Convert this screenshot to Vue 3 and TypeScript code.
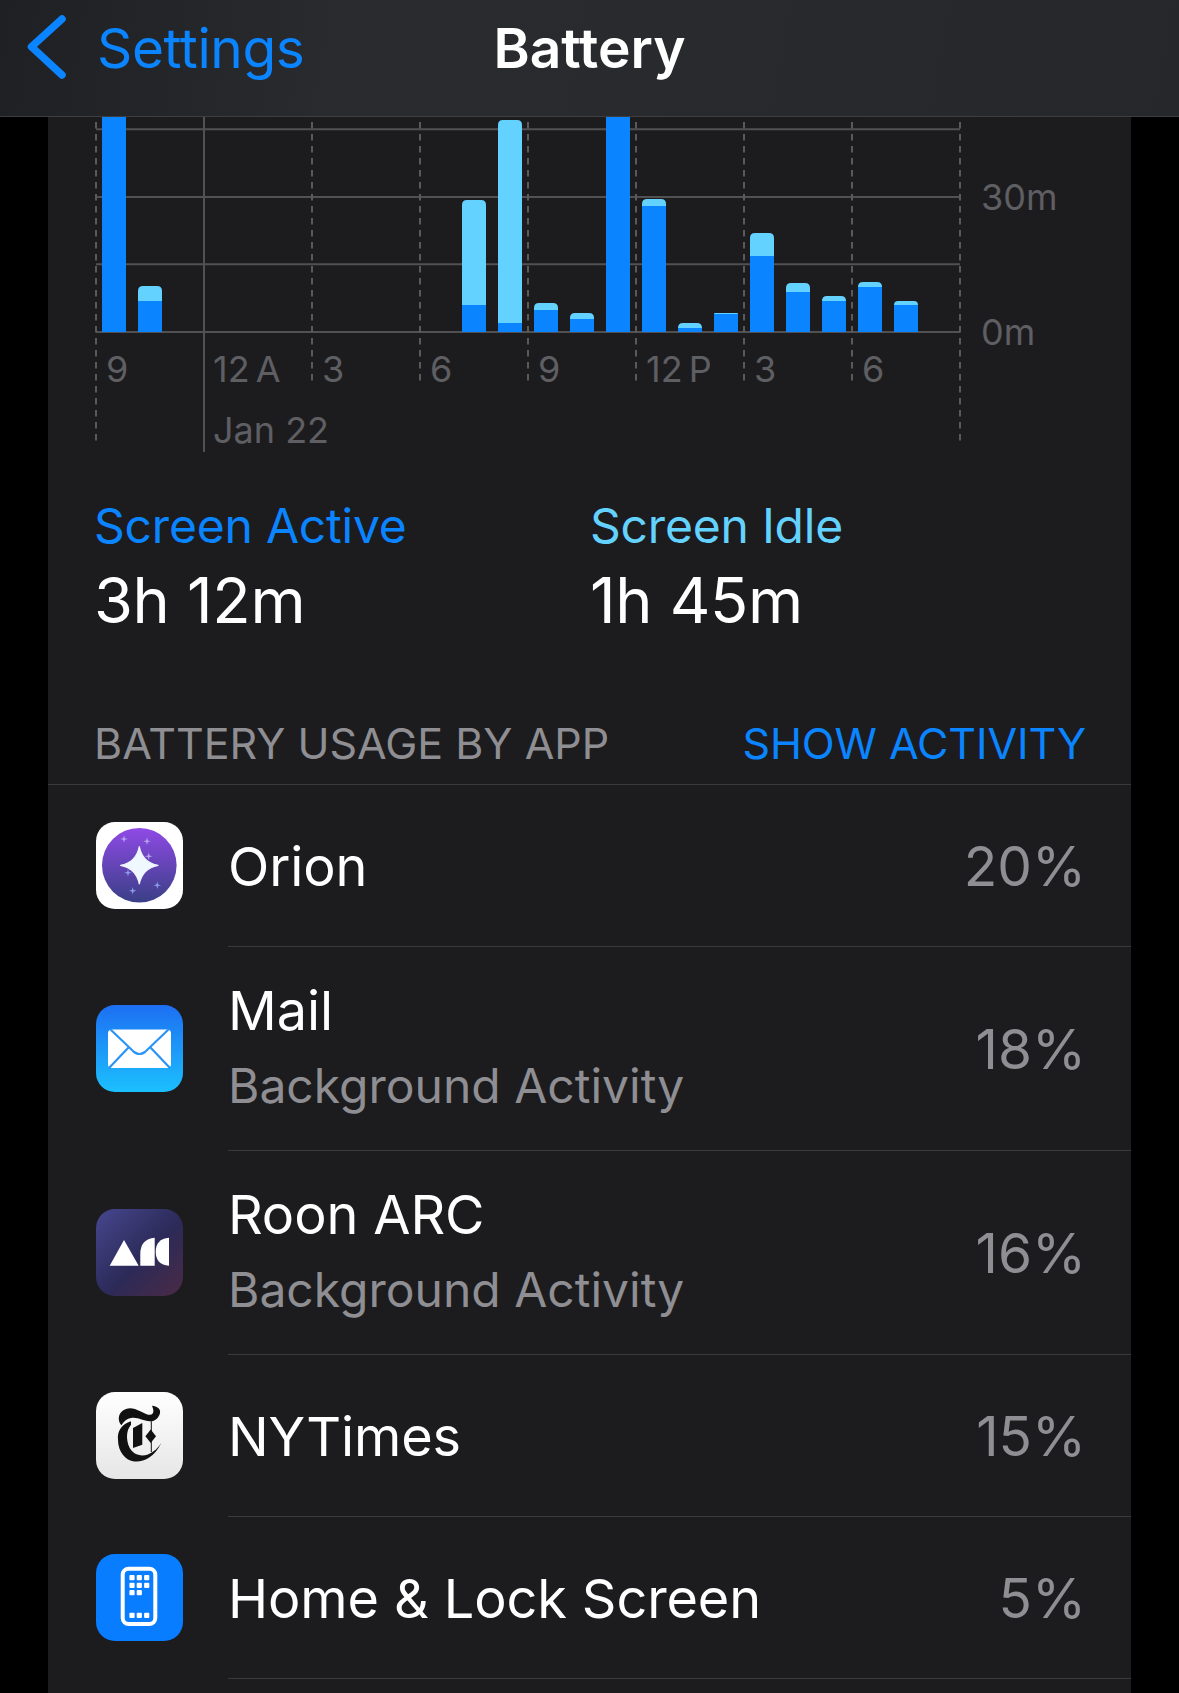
<template>
  <div class="page">
    <header class="nav">
      <div class="back">
        <svg class="chevron" width="44" height="74" viewBox="0 0 44 74">
          <path d="M37 9 L6.5 36.7 L37 65" fill="none" stroke="#0a84ff" stroke-width="7.5" stroke-linecap="round" stroke-linejoin="round" />
        </svg>
        <span>Settings</span>
      </div>
      <div class="title">Battery</div>
    </header>

    <main class="panel">
      <svg class="chart" width="1083" height="335" viewBox="48 117 1083 335">
        <line v-for="y in gridY" :key="y" x1="96" x2="960" :y1="y" :y2="y" class="grid" />
        <line v-for="t in shortTicks" :key="t" :x1="t" :x2="t" y1="122" y2="386" class="dash" />
        <line v-for="t in longTicks" :key="t" :x1="t" :x2="t" y1="122" y2="446" class="dash" />
        <line x1="204" x2="204" y1="117" y2="452" class="solid" />
        <g v-for="b in bars" :key="b.x">
          <path v-if="b.top > 117" :d="roundTop(b.x, b.top, b.split)" fill="#64d2ff" />
          <rect :x="b.x" :y="b.split" width="24" :height="332 - b.split" fill="#0a84ff" />
        </g>
        <text v-for="l in labels" :key="l.text + l.x" :x="l.x" :y="l.y" class="axis" :class="{ tight: l.text.startsWith('12') }">{{ l.text }}</text>
      </svg>

      <section class="stats">
        <div class="stat">
          <div class="stat-label active">Screen Active</div>
          <div class="stat-value">3h 12m</div>
        </div>
        <div class="stat">
          <div class="stat-label idle">Screen Idle</div>
          <div class="stat-value">1h 45m</div>
        </div>
      </section>

      <div class="section-head">
        <span>BATTERY USAGE BY APP</span>
        <span class="show">SHOW ACTIVITY</span>
      </div>

      <ul class="apps">
        <li v-for="app in apps" :key="app.name" class="app" :class="{ tall: app.sub }">
          <div class="icon">
            <svg v-if="app.name === 'Orion'" viewBox="0 0 87 87" width="87" height="87">
              <defs>
                <linearGradient id="orion" x1="0" y1="0" x2="0" y2="1">
                  <stop offset="0" stop-color="#8f4ae6" />
                  <stop offset="1" stop-color="#3a3f86" />
                </linearGradient>
              </defs>
              <rect width="87" height="87" rx="19" fill="#fff" />
              <circle cx="43.3" cy="43.3" r="37.3" fill="url(#orion)" />
              <path d="M43.3 24.5 Q46.3 40.3 62 43.3 Q46.3 46.3 43.3 62 Q40.3 46.3 24.6 43.3 Q40.3 40.3 43.3 24.5 Z" fill="#eff8ff" stroke="#eff8ff" stroke-width="1.2" stroke-linejoin="round" />
              <path v-for="s in orionStars" :key="s[0]" :d="sparkle(s[0], s[1])" :fill="s[1] > 45 ? '#8fa0ea' : '#bba6f2'" />
            </svg>
            <svg v-else-if="app.name === 'Mail'" viewBox="0 0 87 87" width="87" height="87">
              <defs>
                <linearGradient id="mail" x1="0" y1="0" x2="0" y2="1">
                  <stop offset="0" stop-color="#1d6ff2" />
                  <stop offset="1" stop-color="#1cc0fe" />
                </linearGradient>
              </defs>
              <rect width="87" height="87" rx="19" fill="url(#mail)" />
              <rect x="12" y="24.5" width="63" height="38.5" rx="4" fill="#fff" />
              <path d="M14 24 L38 47 Q43.5 51 49 47 L73 24 M13 63 L33 42 M74 63 L54 42" fill="none" stroke="#2a94f6" stroke-width="2.2" />
            </svg>
            <svg v-else-if="app.name === 'Roon ARC'" viewBox="0 0 87 87" width="87" height="87">
              <defs>
                <linearGradient id="roon" x1="0" y1="0" x2="1" y2="1">
                  <stop offset="0" stop-color="#46478f" />
                  <stop offset="0.55" stop-color="#2c2a58" />
                  <stop offset="1" stop-color="#4a2a45" />
                </linearGradient>
              </defs>
              <rect width="87" height="87" rx="19" fill="url(#roon)" />
              <path d="M13.7 56.7 L28 31 L42.7 56.7 Z M44.3 56.7 L44.3 45 Q44.3 30 58.7 28.7 L58.7 56.7 Z" fill="#fff" />
              <path d="M73 28.7 L73 56.7 Q59.7 55.5 59.7 42.7 Q59.7 30 73 28.7 Z" fill="#fff" />
            </svg>
            <svg v-else-if="app.name === 'NYTimes'" viewBox="0 0 87 87" width="87" height="87">
              <defs>
                <linearGradient id="nyt" x1="0" y1="0" x2="0" y2="1">
                  <stop offset="0" stop-color="#fff" />
                  <stop offset="1" stop-color="#e6e6e6" />
                </linearGradient>
              </defs>
              <rect width="87" height="87" rx="19" fill="url(#nyt)" />
              <path d="M25.3 33.3 C21 28 22 20 30 17 C38 14 46 21 52 22.7 C57 23.5 59 20.5 56 13.7 C61 14 65 17 64 21 C63 26 58 30 53.7 29.3 C47 29 42 25 35 26 C31 26.5 28 29 25.3 33.3 Z" fill="#111" />
              <path d="M35 29.3 C26 32 21 39 22 47.7 C22 60 30 68 37 69.3 C46 71 58 66 65.3 51 C62 56 58 60 52 62.5 C44 65 37 62 33.7 56 C29.5 47 30.5 38 35 32.7 Z" fill="#111" />
              <path d="M37 36 L46.3 31 L46.3 52.7 L37 56 Z" fill="#111" />
              <path d="M55.3 29.3 L55.3 60" stroke="#111" stroke-width="1" />
              <path d="M54.7 37.6 L60 44.3 L54.7 51 L49.4 44.3 Z" fill="#111" />
            </svg>
            <svg v-else viewBox="0 0 87 87" width="87" height="87">
              <rect width="87" height="87" rx="19" fill="#087dff" />
              <rect x="26.7" y="14.7" width="32.6" height="55.3" rx="6" fill="none" stroke="#fff" stroke-width="4" />
              <rect v-for="d in homeDots" :key="d[0] + '-' + d[1]" :x="d[0]" :y="d[1]" width="5.2" height="5.2" rx="1" fill="#fff" />
            </svg>
          </div>
          <div class="app-text">
            <div class="app-name">{{ app.name }}</div>
            <div v-if="app.sub" class="app-sub">{{ app.sub }}</div>
          </div>
          <div class="app-pct">{{ app.pct }}</div>
        </li>
      </ul>
    </main>
  </div>
</template>

<script setup lang="ts">
interface Bar {
  x: number;
  top: number;
  split: number;
}

const gridY = [129.3, 197, 264.3, 332];
const shortTicks = [312, 420, 528, 636, 744, 852];
const longTicks = [96, 960];

// slot index, top of light part, top of dark part
const barData: [number, number, number][] = [
  [0, 117, 117],
  [1, 286, 301],
  [10, 200, 305],
  [11, 120, 323],
  [12, 303, 310],
  [13, 313, 319],
  [14, 117, 117],
  [15, 199, 206],
  [16, 323, 328],
  [17, 313, 314],
  [18, 233, 256],
  [19, 283, 292],
  [20, 296, 301],
  [21, 282, 287],
  [22, 301, 305],
];

const bars: Bar[] = barData.map(([i, top, split]) => ({ x: 102 + i * 36, top, split }));

const labels = [
  { text: '9', x: 106, y: 381.5 },
  { text: '12 A', x: 213, y: 381.5 },
  { text: '3', x: 322, y: 381.5 },
  { text: '6', x: 430, y: 381.5 },
  { text: '9', x: 538, y: 381.5 },
  { text: '12 P', x: 646, y: 381.5 },
  { text: '3', x: 754, y: 381.5 },
  { text: '6', x: 862, y: 381.5 },
  { text: 'Jan 22', x: 213, y: 442.5 },
  { text: '30m', x: 981, y: 210 },
  { text: '0m', x: 981, y: 345 },
];

const apps = [
  { name: 'Orion', sub: '', pct: '20%' },
  { name: 'Mail', sub: 'Background Activity', pct: '18%' },
  { name: 'Roon ARC', sub: 'Background Activity', pct: '16%' },
  { name: 'NYTimes', sub: '', pct: '15%' },
  { name: 'Home & Lock Screen', sub: '', pct: '5%' },
];

const orionStars = [
  [28, 17],
  [51, 19.3],
  [52.7, 34.3],
  [32, 50.7],
  [36.7, 68.7],
  [61.3, 63.3],
];

const homeDots = [
  [33.4, 21.1], [40.7, 21.1], [48.1, 21.1],
  [33.4, 28.7], [40.7, 28.7], [48.1, 28.7],
  [33.4, 36.1], [40.7, 36.1],
  [33.4, 58.7], [40.7, 58.7], [48.1, 58.7],
];

function roundTop(x: number, top: number, split: number): string {
  const r = Math.min(5, split - top);
  return `M${x} ${split + 1}V${top + r}Q${x} ${top} ${x + r} ${top}H${x + 24 - r}Q${x + 24} ${top} ${x + 24} ${top + r}V${split + 1}Z`;
}

function sparkle(x: number, y: number): string {
  const a = 3.8;
  const b = 0.8;
  return `M${x} ${y - a}L${x + b} ${y - b}L${x + a} ${y}L${x + b} ${y + b}L${x} ${y + a}L${x - b} ${y + b}L${x - a} ${y}L${x - b} ${y - b}Z`;
}
</script>

<style scoped>
.page {
  width: 1179px;
  height: 1693px;
  overflow: hidden;
  background: #000;
  font-family: Inter, "Liberation Sans", sans-serif;
  color: #fff;
}

.nav {
  height: 117px;
  box-sizing: border-box;
  border-bottom: 1px solid #3e3e41;
  background: linear-gradient(100deg, #1f2023 0%, #2a2b2e 30%, #28292c 75%, #26272a 100%);
  display: flex;
  align-items: flex-start;
  position: relative;
}

.back {
  display: flex;
  align-items: flex-start;
  color: #0a84ff;
  font-size: 55px;
  line-height: 60px;
  padding: 18px 0 0 25px;
  letter-spacing: -0.4px;
}

.chevron {
  margin: -8px 28px 0 0;
}

.title {
  position: absolute;
  left: 0;
  right: 0;
  top: 18px;
  text-align: center;
  font-size: 55px;
  line-height: 60px;
  font-weight: 600;
}

.panel {
  margin: 0 48px;
  background: #1c1c1e;
  height: 1576px;
}

.chart {
  display: block;
}

.grid {
  stroke: #515154;
  stroke-width: 2;
}

.dash {
  stroke: #5a5a5d;
  stroke-width: 2;
  stroke-dasharray: 6.5 5.5;
}

.solid {
  stroke: #515154;
  stroke-width: 2;
}

.axis {
  fill: #5e5e63;
  font-size: 36px;
}

.axis.tight {
  word-spacing: -4px;
}

.stats {
  display: flex;
  padding: 45px 0 0 46px;
}

.stat {
  width: 496px;
}

.stat-label {
  font-size: 48px;
  line-height: 58px;
  letter-spacing: -0.2px;
}

.active {
  color: #0a84ff;
}

.idle {
  color: #64d2ff;
}

.stat-value {
  font-size: 63px;
  line-height: 74px;
  margin-top: 8px;
  letter-spacing: -0.3px;
}

.section-head {
  display: flex;
  justify-content: space-between;
  padding: 0 46px;
  margin-top: 76px;
  font-size: 43px;
  line-height: 60px;
  height: 71px;
  color: #8e8e93;
  border-bottom: 1px solid #3a3a3d;
}

.show {
  color: #0a84ff;
  letter-spacing: -0.1px;
  margin-right: -1px;
}

.apps {
  list-style: none;
  margin: 0;
  padding: 0;
}

.app {
  height: 162px;
  display: flex;
  align-items: center;
  padding-left: 48px;
  padding-right: 45px;
  position: relative;
}

.app.tall {
  height: 204px;
}

.app::after {
  content: "";
  position: absolute;
  left: 180px;
  right: 0;
  bottom: 0;
  height: 1px;
  background: #3a3a3d;
}

.icon {
  width: 87px;
  height: 87px;
  margin: 0 45px 2px 0;
  flex: none;
}

.icon svg {
  display: block;
}

.app-text {
  flex: 1;
  padding-top: 2px;
}

.tall .app-text {
  padding-top: 0;
  padding-bottom: 5px;
}

.app-name {
  font-size: 54px;
  line-height: 66px;
  letter-spacing: -0.1px;
}

.app-sub {
  font-size: 48px;
  line-height: 60px;
  margin-top: 12px;
  color: #8e8e93;
}

.app-pct {
  font-size: 55px;
  color: #8e8e93;
}
</style>

<style>
html,
body {
  background: #000;
}
</style>
